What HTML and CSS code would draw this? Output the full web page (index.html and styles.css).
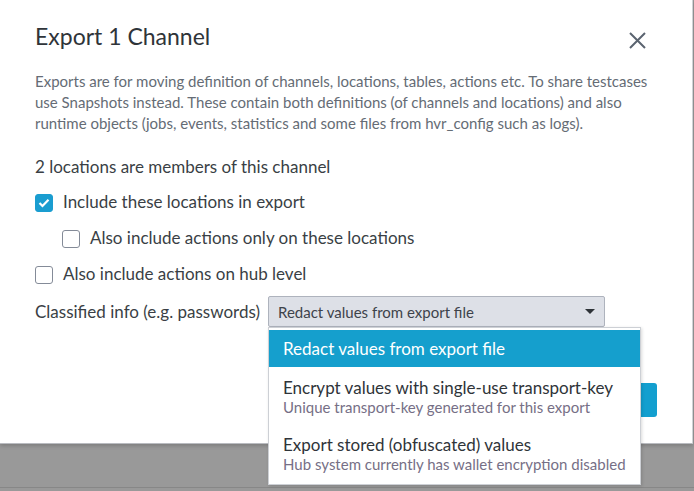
FILE: index.html
```html
<!DOCTYPE html>
<html>
<head>
<meta charset="utf-8">
<link rel="stylesheet" href="styles.css">
</head>
<body>
<div class="dialog">
  <div class="header">
    <h1 class="title">Export 1 Channel</h1>
    <button class="close" aria-label="Close">
      <svg width="17" height="17" viewBox="0 0 17 17"><path d="M1 1 L16 16 M16 1 L1 16" stroke="#5b6470" stroke-width="2" fill="none"/></svg>
    </button>
  </div>
  <p class="desc">Exports are for moving definition of channels, locations, tables, actions etc. To share testcases use Snapshots instead. These contain both definitions (of channels and locations) and also runtime objects (jobs, events, statistics and some files from hvr_config such as logs).</p>
  <div class="members">2 locations are members of this channel</div>
  <label class="check-row">
    <span class="box checked"><svg width="12" height="10" viewBox="0 0 12 10"><path d="M1.5 5 L4.5 8 L10.5 1.8" stroke="#fff" stroke-width="2.2" fill="none"/></svg></span>
    <span class="check-text">Include these locations in export</span>
  </label>
  <label class="check-row indent">
    <span class="box"></span>
    <span class="check-text">Also include actions only on these locations</span>
  </label>
  <label class="check-row">
    <span class="box"></span>
    <span class="check-text">Also include actions on hub level</span>
  </label>
  <div class="select-row">
    <span class="select-label">Classified info (e.g. passwords)</span>
    <div class="select-wrap">
      <div class="select">
        <span>Redact values from export file</span>
        <span class="caret"></span>
      </div>
      <ul class="menu">
        <li class="item active"><div class="item-main">Redact values from export file</div></li>
        <li class="item"><div class="item-main">Encrypt values with single-use transport-key</div><div class="item-sub">Unique transport-key generated for this export</div></li>
        <li class="item"><div class="item-main">Export stored (obfuscated) values</div><div class="item-sub">Hub system currently has wallet encryption disabled</div></li>
      </ul>
    </div>
  </div>
  <div class="footer">
    <button class="primary"></button>
  </div>
</div>
<div class="backdrop"></div>
</body>
</html>
```
FILE: styles.css
```css
* { box-sizing: border-box; }
html, body { margin: 0; padding: 0; }
body {
  width: 694px;
  height: 491px;
  overflow: hidden;
  background: #999;
  font-family: "Lato", "Noto Sans", sans-serif;
  color: #3a3f45;
}
.dialog {
  height: 444px;
  width: 693px;
  background: #fff;
  border-right: 1px solid #d0d2d6;
  border-bottom: 1px solid #b9bbc0;
  padding: 22px 35px 0 35px;
  position: relative;
  z-index: 2;
  box-shadow: 0 2px 4px rgba(0,0,0,0.18);
}
.header {
  display: flex;
  justify-content: space-between;
  align-items: flex-start;
}
.title {
  margin: 0;
  font-size: 23px;
  font-weight: 400;
  color: #2f3439;
  line-height: 28px;
}
.close {
  border: 0;
  background: none;
  padding: 0;
  margin: 10px 11px 0 0;
  width: 17px;
  height: 17px;
  display: flex;
}
.desc {
  margin: 21px 0 0 0;
  font-size: 15px;
  line-height: 21px;
  color: #656c75;
}
.members {
  margin-top: 23px;
  font-size: 17px;
  line-height: 20px;
  color: #3a3f45;
}
.check-row {
  display: flex;
  align-items: center;
  gap: 10px;
  font-size: 17px;
  line-height: 18px;
  height: 18px;
  margin-top: 18px;
  color: #3a3f45;
}
.check-row:first-of-type { margin-top: 17px; }
.check-text { position: relative; top: -1px; }
.check-row.indent { margin-left: 27px; }
.box {
  width: 18px;
  height: 18px;
  border: 1px solid #848b98;
  border-radius: 3px;
  display: flex;
  align-items: center;
  justify-content: center;
  flex: none;
}
.box.checked {
  background: #1a9dd0;
  border-color: #1a9dd0;
}
.select-row {
  display: flex;
  align-items: center;
  gap: 8px;
  margin-top: 12px;
  font-size: 17px;
}
.select-label { color: #3a3f45; }
.select-wrap { position: relative; }
.select {
  width: 337px;
  height: 31px;
  background: #dde0e7;
  border: 1px solid #aeb3bd;
  border-radius: 2px;
  display: flex;
  align-items: center;
  justify-content: space-between;
  padding: 0 9px 0 9px;
  font-size: 15px;
  line-height: 18px;
  color: #3d434b;
}
.caret {
  width: 0; height: 0;
  border-left: 5px solid transparent;
  border-right: 5px solid transparent;
  border-top: 5px solid #2e3338;
}
.menu {
  position: absolute;
  top: 31px;
  left: 0;
  width: 373px;
  margin: 0;
  padding: 2px 0 3px 0;
  list-style: none;
  background: #fff;
  border: 1px solid #cdd0d5;
  box-shadow: 1px 1px 3px rgba(0,0,0,0.15);
  z-index: 5;
}
.item { padding: 11px 14px 8px 14px; }
.item.active {
  background: #159fcd;
  height: 37px;
  padding: 0 14px;
  display: flex;
  align-items: center;
}
.item-main { font-size: 17px; line-height: 20px; color: #2f3439; }
.item.active .item-main { color: #fff; }
.item-sub { font-size: 15px; line-height: 18px; color: #766f86; }
.footer {
  display: flex;
  justify-content: flex-end;
  margin-top: 56px;
}
.primary {
  width: 80px;
  height: 34px;
  background: #139fcf;
  border: 0;
  border-radius: 3px;
}
.backdrop {
  height: 44px;
  background: #999;
  border-bottom: 1px solid #878787;
}
```
